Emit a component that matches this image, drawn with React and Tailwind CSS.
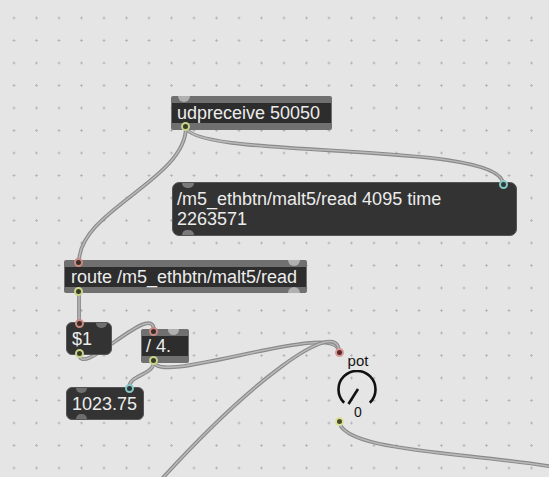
import React from "react";

const cords = [
  "M186,127 C186,180 79,210 79,262",
  "M186,127 C192,160 503,140 503,184",
  "M79,292 L79,323",
  "M79,353 C79,382 154,298 154,331",
  "M154,361 C154,376 129,374 129,388",
  "M154,361 C154,388 339,318 339,352",
  "M150,492 C250,380 339,315 339,352",
  "M339,420 C339,452 470,452 560,468",
];

function Ring({ className }) {
  return <span className={"absolute h-[9px] w-[9px] rounded-full border-2 " + className} />;
}

export default function App() {
  return (
    <div className="relative h-[477px] w-[549px] overflow-hidden bg-[#e5e5e5] bg-[radial-gradient(circle,#b3b3b3_0.9px,transparent_1.4px)] bg-size-[22.5px_22.5px] bg-position-[2.75px_6.75px] font-['Liberation_Sans',Arial,sans-serif] text-[18px] text-[#ececec]">
      <svg className="absolute inset-0" width="549" height="477">
        {cords.map((d, i) => (
          <g key={i} fill="none" strokeLinecap="round">
            <path d={d} stroke="#8a8a8a" strokeWidth="3.8" />
            <path d={d} stroke="#b9b9b9" strokeWidth="1.5" />
          </g>
        ))}
      </svg>

      {/* udpreceive */}
      <div className="absolute left-[171px] top-[96px] flex h-[34px] w-[161px] flex-col justify-center rounded-[2px] bg-[#707070] px-px">
        <div className="flex h-5 items-center bg-[#2d2d2d] pl-[5px] leading-5">udpreceive 50050</div>
        <span className="absolute left-[7px] top-0 h-[6px] w-[12px] rounded-b-full bg-[#b0b0b0]" />
        <Ring className="left-[10px] top-[26px] border-[#c9d38a] bg-[#3b3b2a]" />
      </div>

      {/* message */}
      <div className="absolute left-[172px] top-[182px] h-[54px] w-[345px] rounded-[7px] border border-[#555] bg-[#333] pl-[4px] pt-[6px] leading-5">
        <div>/m5_ethbtn/malt5/read 4095 time</div>
        <div>2263571</div>
        <span className="absolute left-[9px] top-0 h-[5px] w-[12px] rounded-b-full bg-[#7a7a7a]" />
        <span className="absolute bottom-0 left-[9px] h-[5px] w-[12px] rounded-t-full bg-[#7a7a7a]" />
        <Ring className="left-[326px] top-[-3px] border-[#86c6c6] bg-[#2d3a3a]" />
      </div>

      {/* route */}
      <div className="absolute left-[64px] top-[260px] flex h-[33px] w-[243px] flex-col justify-center rounded-[2px] bg-[#707070] px-px">
        <div className="flex h-5 items-center bg-[#2d2d2d] pl-[6px] leading-5">route /m5_ethbtn/malt5/read</div>
        <span className="absolute left-[224px] top-0 h-[6px] w-[12px] rounded-b-full bg-[#b0b0b0]" />
        <span className="absolute bottom-0 left-[224px] h-[6px] w-[12px] rounded-t-full bg-[#b0b0b0]" />
        <Ring className="left-[10px] top-[-2px] border-[#c98a80] bg-[#3b2b2b]" />
        <Ring className="left-[10px] top-[27px] border-[#c9d38a] bg-[#3b3b2a]" />
      </div>

      {/* $1 */}
      <div className="absolute left-[66px] top-[322px] flex h-[33px] w-[46px] items-center rounded-[6px] border border-[#555] bg-[#333] pl-[5px] leading-5">
        $1
        <span className="absolute left-[29px] top-0 h-[5px] w-[11px] rounded-b-full bg-[#6e6e6e]" />
        <Ring className="left-[8px] top-[-4px] border-[#c98a80] bg-[#3b2b2b]" />
        <Ring className="left-[8px] top-[26px] border-[#c9d38a] bg-[#3b3b2a]" />
      </div>

      {/* / 4. */}
      <div className="absolute left-[141px] top-[329px] flex h-[34px] w-[48px] flex-col justify-center rounded-[2px] bg-[#707070] px-px">
        <div className="flex h-5 items-center bg-[#2d2d2d] pl-[4px] leading-5">/ 4.</div>
        <span className="absolute left-[27px] top-0 h-[6px] w-[11px] rounded-b-full bg-[#b0b0b0]" />
        <Ring className="left-[8px] top-[-2px] border-[#c98a80] bg-[#3b2b2b]" />
        <Ring className="left-[8px] top-[27px] border-[#c9d38a] bg-[#3b3b2a]" />
      </div>

      {/* 1023.75 */}
      <div className="absolute left-[66px] top-[387px] flex h-[33px] w-[78px] items-center rounded-[6px] border border-[#555] bg-[#333] pl-[5px] leading-5">
        1023.75
        <span className="absolute left-[9px] top-0 h-[5px] w-[11px] rounded-b-full bg-[#6e6e6e]" />
        <span className="absolute bottom-0 left-[9px] h-[5px] w-[11px] rounded-t-full bg-[#6e6e6e]" />
        <Ring className="left-[58px] top-[-4px] border-[#86c6c6] bg-[#2d3a3a]" />
      </div>

      {/* pot dial */}
      <div className="absolute left-[334px] top-[347px] flex h-[78px] w-[46px] flex-col items-center text-[#151515]">
        <Ring className="left-[1px] top-[1px] border-[#d89a96] bg-[#5a2a2a]" />
        <Ring className="left-[1px] top-[70px] border-[#dde29a] bg-[#4a4a2a]" />
        <div className="mt-[6px] pl-[2px] text-[15px] leading-4">pot</div>
        <svg width="44" height="40" viewBox="0 0 44 40" className="mt-[1px]">
          <path d="M9.2,32.8 A18.5,18.5 0 1 1 34.8,32.8" fill="none" stroke="#111" strokeWidth="2.6" />
          <line x1="23" y1="19" x2="13.5" y2="34" stroke="#111" strokeWidth="2.6" />
        </svg>
        <div className="mt-[-6px] pl-[2px] text-[14px] leading-4">0</div>
      </div>
    </div>
  );
}
